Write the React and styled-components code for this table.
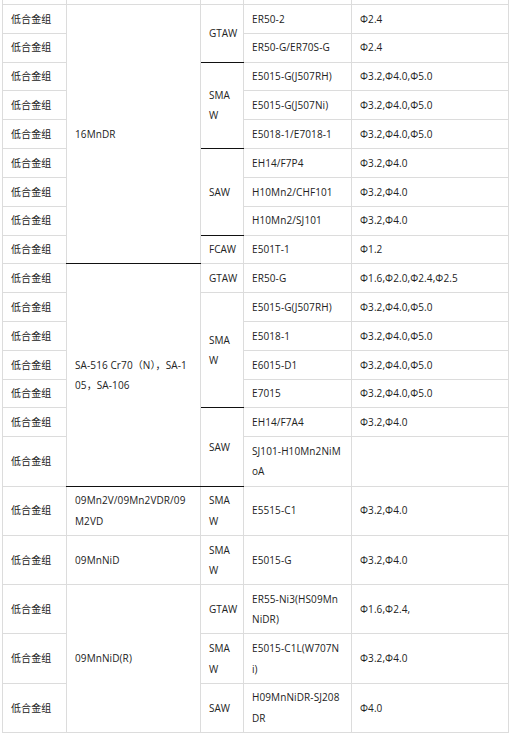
import React from 'react';
import styled, { createGlobalStyle } from 'styled-components';

const GlobalStyle = createGlobalStyle`
  html, body {
    margin: 0;
    padding: 0;
    background: #ffffff;
  }
`;

const Page = styled.div`
  width: 510px;
  height: 734px;
  overflow: hidden;
  background: #fff;
`;

const Table = styled.table`
  border-collapse: collapse;
  table-layout: fixed;
  width: 506px;
  margin: -25.5px 0 0 2px;
  font-family: 'Open Sans', 'Noto Sans CJK SC', sans-serif;
  font-size: 10px;
  line-height: 20.46px;
  color: #222;
`;

const Cell = styled.td`
  border: 1px solid #dcdcdc;
  border-bottom-color: ${(p) => (p.$dark ? '#111' : '#dcdcdc')};
  padding: 3.7px ${(p) => p.$pr}px 3.7px 8px;
  vertical-align: middle;
  word-break: break-all;
  letter-spacing: ${(p) => (p.$pr < 7 ? '0' : '0.1px')};
  height: ${(p) => (p.$ghost ? '21px' : 'auto')};
`;

const cols = [64, 134, 43, 108, 157];

// right padding per column, for the same wraps as the original
const colPad = [7, 12, 5, 7, 7];

const rows = [
  [{}, {}, {}, {}, {}],
  [{ t: '低合金组' }, { t: '16MnDR', rs: 9, dark: true }, { t: 'GTAW', rs: 2, dark: true }, { t: 'ER50-2' }, { t: 'Φ2.4' }],
  [{ t: '低合金组' }, { t: 'ER50-G/ER70S-G' }, { t: 'Φ2.4' }],
  [{ t: '低合金组' }, { t: 'SMAW', rs: 3, dark: true }, { t: 'E5015-G(J507RH)' }, { t: 'Φ3.2,Φ4.0,Φ5.0' }],
  [{ t: '低合金组' }, { t: 'E5015-G(J507Ni)' }, { t: 'Φ3.2,Φ4.0,Φ5.0' }],
  [{ t: '低合金组' }, { t: 'E5018-1/E7018-1' }, { t: 'Φ3.2,Φ4.0,Φ5.0' }],
  [{ t: '低合金组' }, { t: 'SAW', rs: 3, dark: true }, { t: 'EH14/F7P4' }, { t: 'Φ3.2,Φ4.0' }],
  [{ t: '低合金组' }, { t: 'H10Mn2/CHF101' }, { t: 'Φ3.2,Φ4.0' }],
  [{ t: '低合金组' }, { t: 'H10Mn2/SJ101' }, { t: 'Φ3.2,Φ4.0' }],
  [{ t: '低合金组' }, { t: 'FCAW' }, { t: 'E501T-1' }, { t: 'Φ1.2' }],
  [
    { t: '低合金组' },
    { t: 'SA-516 Cr70（N），SA-105，SA-106', rs: 7, dark: true },
    { t: 'GTAW' },
    { t: 'ER50-G' },
    { t: 'Φ1.6,Φ2.0,Φ2.4,Φ2.5' },
  ],
  [{ t: '低合金组' }, { t: 'SMAW', rs: 4, dark: true }, { t: 'E5015-G(J507RH)' }, { t: 'Φ3.2,Φ4.0,Φ5.0' }],
  [{ t: '低合金组' }, { t: 'E5018-1' }, { t: 'Φ3.2,Φ4.0,Φ5.0' }],
  [{ t: '低合金组' }, { t: 'E6015-D1' }, { t: 'Φ3.2,Φ4.0,Φ5.0' }],
  [{ t: '低合金组' }, { t: 'E7015' }, { t: 'Φ3.2,Φ4.0,Φ5.0' }],
  [{ t: '低合金组' }, { t: 'SAW', rs: 2, dark: true }, { t: 'EH14/F7A4' }, { t: 'Φ3.2,Φ4.0' }],
  [{ t: '低合金组' }, { t: 'SJ101-H10Mn2NiMoA' }, { t: '' }],
  [{ t: '低合金组' }, { t: '09Mn2V/09Mn2VDR/09M2VD' }, { t: 'SMAW' }, { t: 'E5515-C1' }, { t: 'Φ3.2,Φ4.0' }],
  [{ t: '低合金组' }, { t: '09MnNiD' }, { t: 'SMAW' }, { t: 'E5015-G' }, { t: 'Φ3.2,Φ4.0' }],
  [{ t: '低合金组' }, { t: '09MnNiD(R)', rs: 3 }, { t: 'GTAW' }, { t: 'ER55-Ni3(HS09MnNiDR)' }, { t: 'Φ1.6,Φ2.4,' }],
  [{ t: '低合金组' }, { t: 'SMAW' }, { t: 'E5015-C1L(W707Ni)' }, { t: 'Φ3.2,Φ4.0' }],
  [{ t: '低合金组' }, { t: 'SAW' }, { t: 'H09MnNiDR-SJ208DR' }, { t: 'Φ4.0' }],
];

// column index of each cell, skipping the columns taken by rowspans above
function placeCells(allRows) {
  const taken = [];
  return allRows.map((row, ri) => {
    let col = 0;
    return row.map((c) => {
      while (taken[ri] && taken[ri][col]) col++;
      const span = c.rs || 1;
      for (let k = 1; k < span; k++) {
        taken[ri + k] = taken[ri + k] || [];
        taken[ri + k][col] = true;
      }
      const placed = { ...c, col };
      col++;
      return placed;
    });
  });
}

const placed = placeCells(rows);

export default function App() {
  return (
    <Page>
      <GlobalStyle />
      <Table>
        <colgroup>
          {cols.map((w, i) => (
            <col key={i} style={{ width: w }} />
          ))}
        </colgroup>
        <tbody>
          {placed.map((row, ri) => (
            <tr key={ri}>
              {row.map((c, ci) => (
                <Cell
                  key={ci}
                  rowSpan={c.rs || 1}
                  $dark={c.dark}
                  $pr={colPad[c.col]}
                  $ghost={ri === 0}
                >
                  {c.t}
                </Cell>
              ))}
            </tr>
          ))}
        </tbody>
      </Table>
    </Page>
  );
}
